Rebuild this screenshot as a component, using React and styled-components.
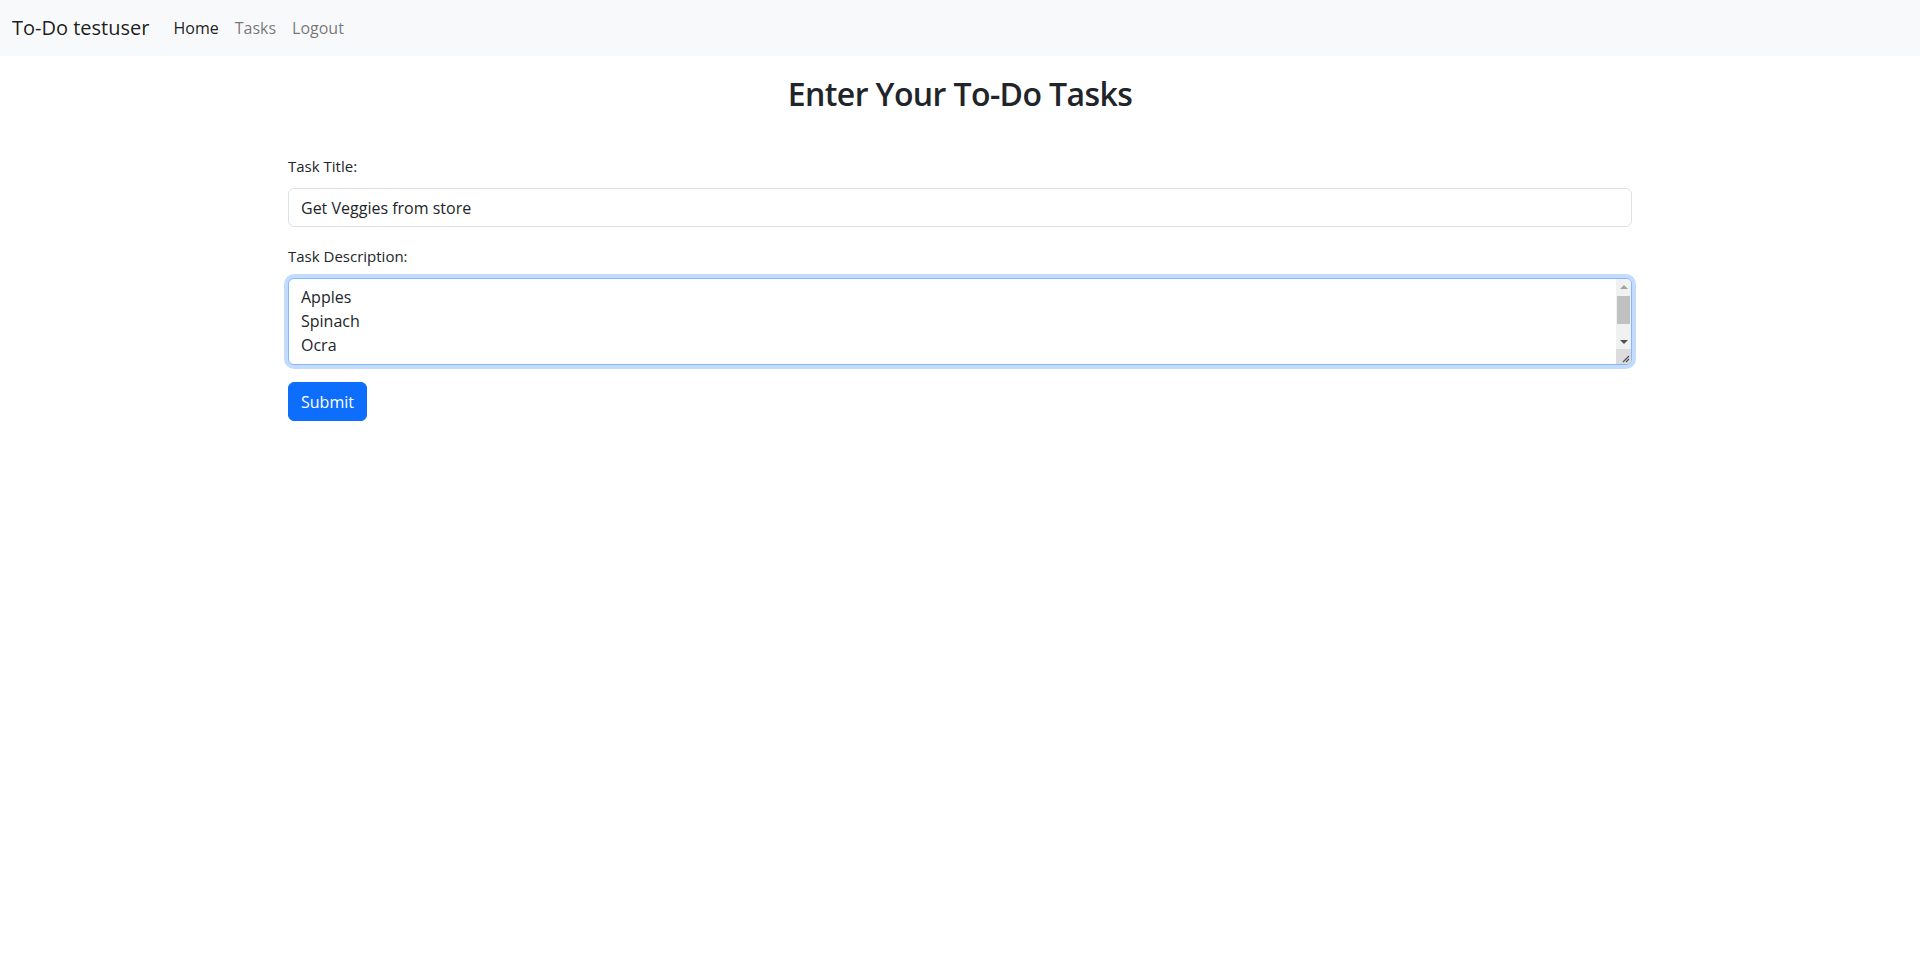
import React from 'react'
import styled, { createGlobalStyle, css } from 'styled-components'

const GlobalStyle = createGlobalStyle`
	*, *::before, *::after {
		box-sizing: border-box;
	}

	body {
		margin: 0;
		font-family: 'Open Sans', 'Noto Sans', sans-serif;
		font-size: 16px;
		line-height: 1.5;
		color: #212529;
		background: #fff;
	}
`

const Navbar = styled.nav`
	display: flex;
	align-items: center;
	height: 56px;
	padding: 8px 12px;
	background-color: #f8f9fa;
`

const Brand = styled.a`
	font-size: 20px;
	line-height: 30px;
	padding: 5px 0;
	margin-right: 16px;
	color: rgba(0, 0, 0, 0.9);
	text-decoration: none;
`

const NavLinks = styled.ul`
	display: flex;
	list-style: none;
	margin: 0;
	padding: 0;
`

const NavLink = styled.a`
	display: block;
	padding: 8px;
	color: ${props => (props.$active ? 'rgba(0, 0, 0, 0.9)' : 'rgba(0, 0, 0, 0.55)')};
	text-decoration: none;
`

const Main = styled.main`
	width: 70%;
	margin: 0 auto;
`

const Heading = styled.h2`
	margin: 19px 0 41px;
	font-size: 32px;
	font-weight: 600;
	line-height: 1.2;
	letter-spacing: -0.6px;
	text-align: center;
`

const Field = styled.div`
	margin-bottom: 17px;
`

const Label = styled.label`
	display: inline-block;
	margin-bottom: 10px;
	font-size: 15px;
	line-height: 24px;
`

const controlStyles = css`
	display: block;
	width: 100%;
	padding: 6px 12px;
	font-family: inherit;
	font-size: 16px;
	line-height: 1.5;
	color: #212529;
	background: #fff;
	border: 1px solid #dee2e6;
	border-radius: 6px;
	outline: none;

	${props =>
		props.$focused &&
		css`
			border-color: #86b7fe;
			box-shadow: 0 0 0 4px rgba(13, 110, 253, 0.25);
		`}
`

const Input = styled.input`
	${controlStyles}
	height: 39px;
`

const TextAreaWrap = styled.div`
	position: relative;
`

const TextArea = styled.textarea`
	${controlStyles}
	height: 87px;
	padding-top: 6px;
	padding-right: 28px;
	overflow: hidden;
	resize: none;
`

// headless browser hides native scrollbars, so the textarea's one is drawn here
const ScrollBar = styled.div`
	position: absolute;
	top: 1px;
	right: 1px;
	bottom: 1px;
	width: 15px;
	display: flex;
	flex-direction: column;
	background: #f1f1f1;
	border-top-right-radius: 5px;
	border-bottom-right-radius: 5px;
	overflow: hidden;
	pointer-events: none;
`

const ArrowButton = styled.div`
	flex: 0 0 15px;
	display: flex;
	align-items: center;
	justify-content: center;

	&::before {
		content: '';
		border-left: 4px solid transparent;
		border-right: 4px solid transparent;
		${props =>
			props.$dir === 'up'
				? css`
						border-bottom: 4px solid ${props.$disabled ? '#a3a3a3' : '#505050'};
					`
				: css`
						border-top: 4px solid ${props.$disabled ? '#a3a3a3' : '#505050'};
					`}
	}
`

const Track = styled.div`
	flex: 1;
	padding: 2px 0 0;
`

const Thumb = styled.div`
	height: 28px;
	margin: 0 1px;
	background: #c1c1c1;
`

const Corner = styled.div`
	flex: 0 0 15px;
	display: flex;
	align-items: flex-end;
	justify-content: flex-end;
	background: #dcdcdc;
`

const ResizeGrip = () => (
	<svg width="15" height="15" viewBox="0 0 15 15">
		<path d="M13 7 L7 13 M13 10 L10 13" stroke="#505050" strokeWidth="1.2" />
	</svg>
)

const SubmitButton = styled.button`
	display: inline-block;
	height: 39px;
	padding: 0 12px;
	font-family: inherit;
	font-size: 16px;
	line-height: 24px;
	color: #fff;
	background-color: #0d6efd;
	border: 1px solid #0d6efd;
	border-radius: 6px;
	cursor: pointer;
`

const App = () => (
	<>
		<GlobalStyle />
		<Navbar>
			<Brand href="#">To-Do testuser</Brand>
			<NavLinks>
				<li>
					<NavLink href="#" $active>
						Home
					</NavLink>
				</li>
				<li>
					<NavLink href="#">Tasks</NavLink>
				</li>
				<li>
					<NavLink href="#">Logout</NavLink>
				</li>
			</NavLinks>
		</Navbar>
		<Main>
			<Heading>Enter Your To-Do Tasks</Heading>
			<form onSubmit={e => e.preventDefault()}>
				<Field>
					<Label htmlFor="title">Task Title:</Label>
					<Input id="title" type="text" defaultValue="Get Veggies from store" />
				</Field>
				<Field>
					<Label htmlFor="description">Task Description:</Label>
					<TextAreaWrap>
						<TextArea id="description" $focused defaultValue={'Apples\nSpinach\nOcra'} />
						<ScrollBar>
							<ArrowButton $dir="up" $disabled />
							<Track>
								<Thumb />
							</Track>
							<ArrowButton $dir="down" />
							<Corner>
								<ResizeGrip />
							</Corner>
						</ScrollBar>
					</TextAreaWrap>
				</Field>
				<SubmitButton type="submit">Submit</SubmitButton>
			</form>
		</Main>
	</>
)

export default App
